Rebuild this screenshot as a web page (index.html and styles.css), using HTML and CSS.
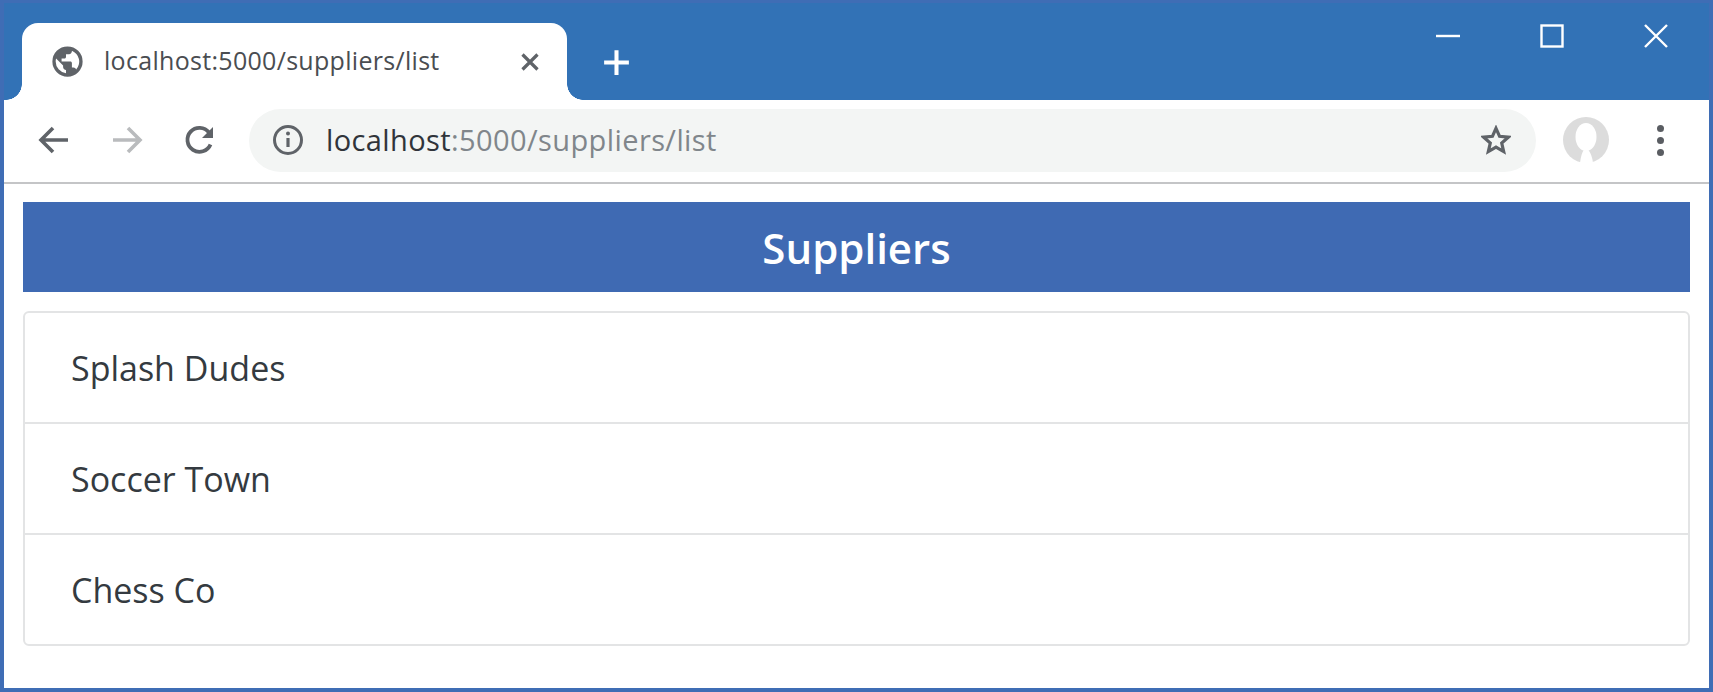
FILE: index.html
```html
<!DOCTYPE html>
<html lang="en">
<head>
    <meta charset="UTF-8">
    <title>localhost:5000/suppliers/list</title>
    <link rel="stylesheet" href="styles.css">
</head>
<body>
    <div class="window">

        <!-- Tab strip -->
        <div class="tabstrip">
            <div class="tab">
                <svg class="tab-globe" viewBox="0 0 24 24"><path fill="#5f6368" d="M12 1a11 11 0 1 0 0 22 11 11 0 0 0 0-22zM3.400 12c0-.8.1-1.500.3-2.200l5.100 5.100v1.100c0 1.200 1 2.100 2.100 2.100v2.400A8.600 8.600 0 0 1 3.400 12zm14.900 5.800c-.3-.9-1.100-1.500-2-1.500h-1.100v-3.200c0-.6-.5-1.100-1.100-1.100H7.700V9.900h2.100c.6 0 1.100-.5 1.100-1.100V6.700h2.200c1.200 0 2.100-1 2.100-2.100v-.5a8.600 8.600 0 0 1 3.100 13.700z"/></svg>
                <span class="tab-title">localhost:5000/suppliers/list</span>
                <svg class="tab-close" viewBox="0 0 16 16"><path d="M2 2l12 12M14 2L2 14" stroke="#5f6368" stroke-width="2.600" fill="none"/></svg>
            </div>
            <svg class="new-tab" viewBox="0 0 24 24"><path d="M12 1v22M1 12h22" stroke="#fff" stroke-width="3.600" fill="none"/></svg>
            <div class="window-controls">
                <svg viewBox="0 0 24 24"><path d="M0 12h24" stroke="#fff" stroke-width="2.400"/></svg>
                <svg viewBox="0 0 24 24"><rect x="1.500" y="1.500" width="21" height="21" stroke="#fff" stroke-width="2.400" fill="none"/></svg>
                <svg viewBox="0 0 24 24"><path d="M1 1l22 22M23 1L1 23" stroke="#fff" stroke-width="2.400" fill="none"/></svg>
            </div>
        </div>

        <!-- Toolbar -->
        <div class="toolbar">
            <svg class="nav-icon" viewBox="0 0 32 32"><path d="M30 16H4M15 4L3 16l12 12" stroke="#5f6368" stroke-width="3.600" fill="none"/></svg>
            <svg class="nav-icon" viewBox="0 0 32 32"><path d="M2 16h26M17 4l12 12-12 12" stroke="#b9bbbd" stroke-width="3.600" fill="none"/></svg>
            <svg class="nav-icon" viewBox="0 0 32 32"><path d="M26.500 20.500A12 12 0 1 1 25 8.500" stroke="#5f6368" stroke-width="3.800" fill="none"/><path d="M29 3v11H18z" fill="#5f6368"/></svg>
            <div class="omnibox">
                <svg class="info-icon" viewBox="0 0 32 32"><circle cx="16" cy="16" r="13.500" stroke="#5f6368" stroke-width="3" fill="none"/><path d="M16 14v9" stroke="#5f6368" stroke-width="3.200"/><circle cx="16" cy="9.500" r="2" fill="#5f6368"/></svg>
                <span class="url"><span class="url-host">localhost</span>:5000/suppliers/list</span>
                <svg class="star-icon" viewBox="0 0 32 32"><path d="M16 3.500l3.800 8.600 9.300.9-7 6.200 2.100 9.200-8.200-4.800-8.200 4.800 2.100-9.200-7-6.200 9.300-.9z" stroke="#5f6368" stroke-width="3.400" fill="none"/></svg>
            </div>
            <svg class="avatar" viewBox="0 0 46 46"><circle cx="23" cy="23" r="23" fill="#dcdcdc"/><ellipse cx="23" cy="20" rx="10.500" ry="14" fill="#fff"/><path d="M17 46c1-8 3-14 6-14s6 6 7 14z" fill="#fff"/></svg>
            <div class="menu-dots"><span></span><span></span><span></span></div>
        </div>

        <!-- Page -->
        <div class="page">
            <h1 class="page-title">Suppliers</h1>
            <ul class="supplier-list">
                <li>Splash Dudes</li>
                <li>Soccer Town</li>
                <li>Chess Co</li>
            </ul>
        </div>
    </div>
</body>
</html>
```

FILE: styles.css
```css
html, body {
    margin: 0;
    padding: 0;
    height: 100%;
    overflow: hidden;
}

.window {
    box-sizing: border-box;
    height: 692px;
    border: 4px solid #3f6db5;
    border-top-width: 3px;
    background-color: white;
    display: flex;
    flex-direction: column;
}

/* Tab strip */
.tabstrip {
    height: 97px;
    background-color: #3272b6;
    display: flex;
    align-items: flex-end;
    position: relative;
}

.tab {
    box-sizing: border-box;
    width: 545px;
    height: 77px;
    margin-left: 18px;
    padding: 0 25px 0 29px;
    background-color: white;
    border-radius: 16px 16px 0 0;
    display: flex;
    align-items: center;
    position: relative;
}

/* Little flared corners at the foot of the tab */
.tab::before,
.tab::after {
    content: '';
    position: absolute;
    bottom: 0;
    width: 16px;
    height: 16px;
    background: radial-gradient(circle at var(--cx) 0, #3272b6 15.500px, white 16px);
}

.tab::before {
    --cx: 0;
    left: -16px;
}

.tab::after {
    --cx: 100%;
    right: -16px;
}

.tab-globe {
    width: 33px;
    height: 33px;
    flex-shrink: 0;
}

.tab-title {
    margin-left: 20px;
    margin-bottom: 3px;
    font-family: "Open Sans", sans-serif;
    font-size: 25px;
    letter-spacing: 0.3px;
    color: #4a4d51;
    white-space: nowrap;
    flex-grow: 1;
}

.tab-close {
    width: 20px;
    height: 20px;
    margin-right: 2px;
}

.new-tab {
    width: 27px;
    height: 27px;
    margin: 0 0 24px 36px;
}

.window-controls {
    position: absolute;
    top: 21px;
    right: 41px;
    display: flex;
    gap: 80px;
}

.window-controls svg {
    width: 24px;
    height: 24px;
}

/* Toolbar */
.toolbar {
    box-sizing: border-box;
    height: 84px;
    padding: 0 0 2px 34px;
    background-color: white;
    border-bottom: 2px solid #c4c5c7;
    display: flex;
    align-items: center;
}

.nav-icon {
    width: 32px;
    height: 32px;
    flex-shrink: 0;
    margin-right: 41px;
}

.nav-icon:nth-child(3) {
    margin-right: 33px;
}

.omnibox {
    box-sizing: border-box;
    width: 1287px;
    height: 63px;
    padding: 0 25px 0 23px;
    background-color: #f3f5f4;
    border-radius: 32px;
    display: flex;
    align-items: center;
    flex-shrink: 0;
}

.info-icon {
    width: 32px;
    height: 32px;
    flex-shrink: 0;
}

.url {
    margin-left: 22px;
    margin-bottom: 2px;
    font-family: "Open Sans", sans-serif;
    font-size: 29px;
    letter-spacing: 0.4px;
    color: #80868b;
    white-space: nowrap;
    flex-grow: 1;
}

.url-host {
    color: #30343a;
}

.star-icon {
    width: 30px;
    height: 30px;
}

.avatar {
    width: 46px;
    height: 46px;
    margin-left: 27px;
    flex-shrink: 0;
}

.menu-dots {
    margin-left: 48px;
    display: flex;
    flex-direction: column;
    gap: 5px;
}

.menu-dots span {
    width: 7px;
    height: 7px;
    border-radius: 50%;
    background-color: #5a5d62;
}

/* Page content */
.page {
    padding: 18px 19px 0 19px;
}

.page-title {
    margin: 0;
    height: 90px;
    line-height: 91px;
    background-color: #3f6ab3;
    color: white;
    font-family: "Open Sans", sans-serif;
    font-size: 42px;
    font-weight: 600;
    text-align: center;
}

.supplier-list {
    list-style: none;
    margin: 19px 0 0;
    padding: 0;
    border: 2px solid #e3e4e5;
    border-radius: 6px;
}

.supplier-list li {
    box-sizing: border-box;
    height: 111px;
    line-height: 111px;
    padding-left: 46px;
    font-family: "Open Sans", sans-serif;
    font-size: 34px;
    color: #343a40;
    border-bottom: 2px solid #e3e4e5;
}

.supplier-list li:last-child {
    height: 109px;
    border-bottom: none;
}
```
